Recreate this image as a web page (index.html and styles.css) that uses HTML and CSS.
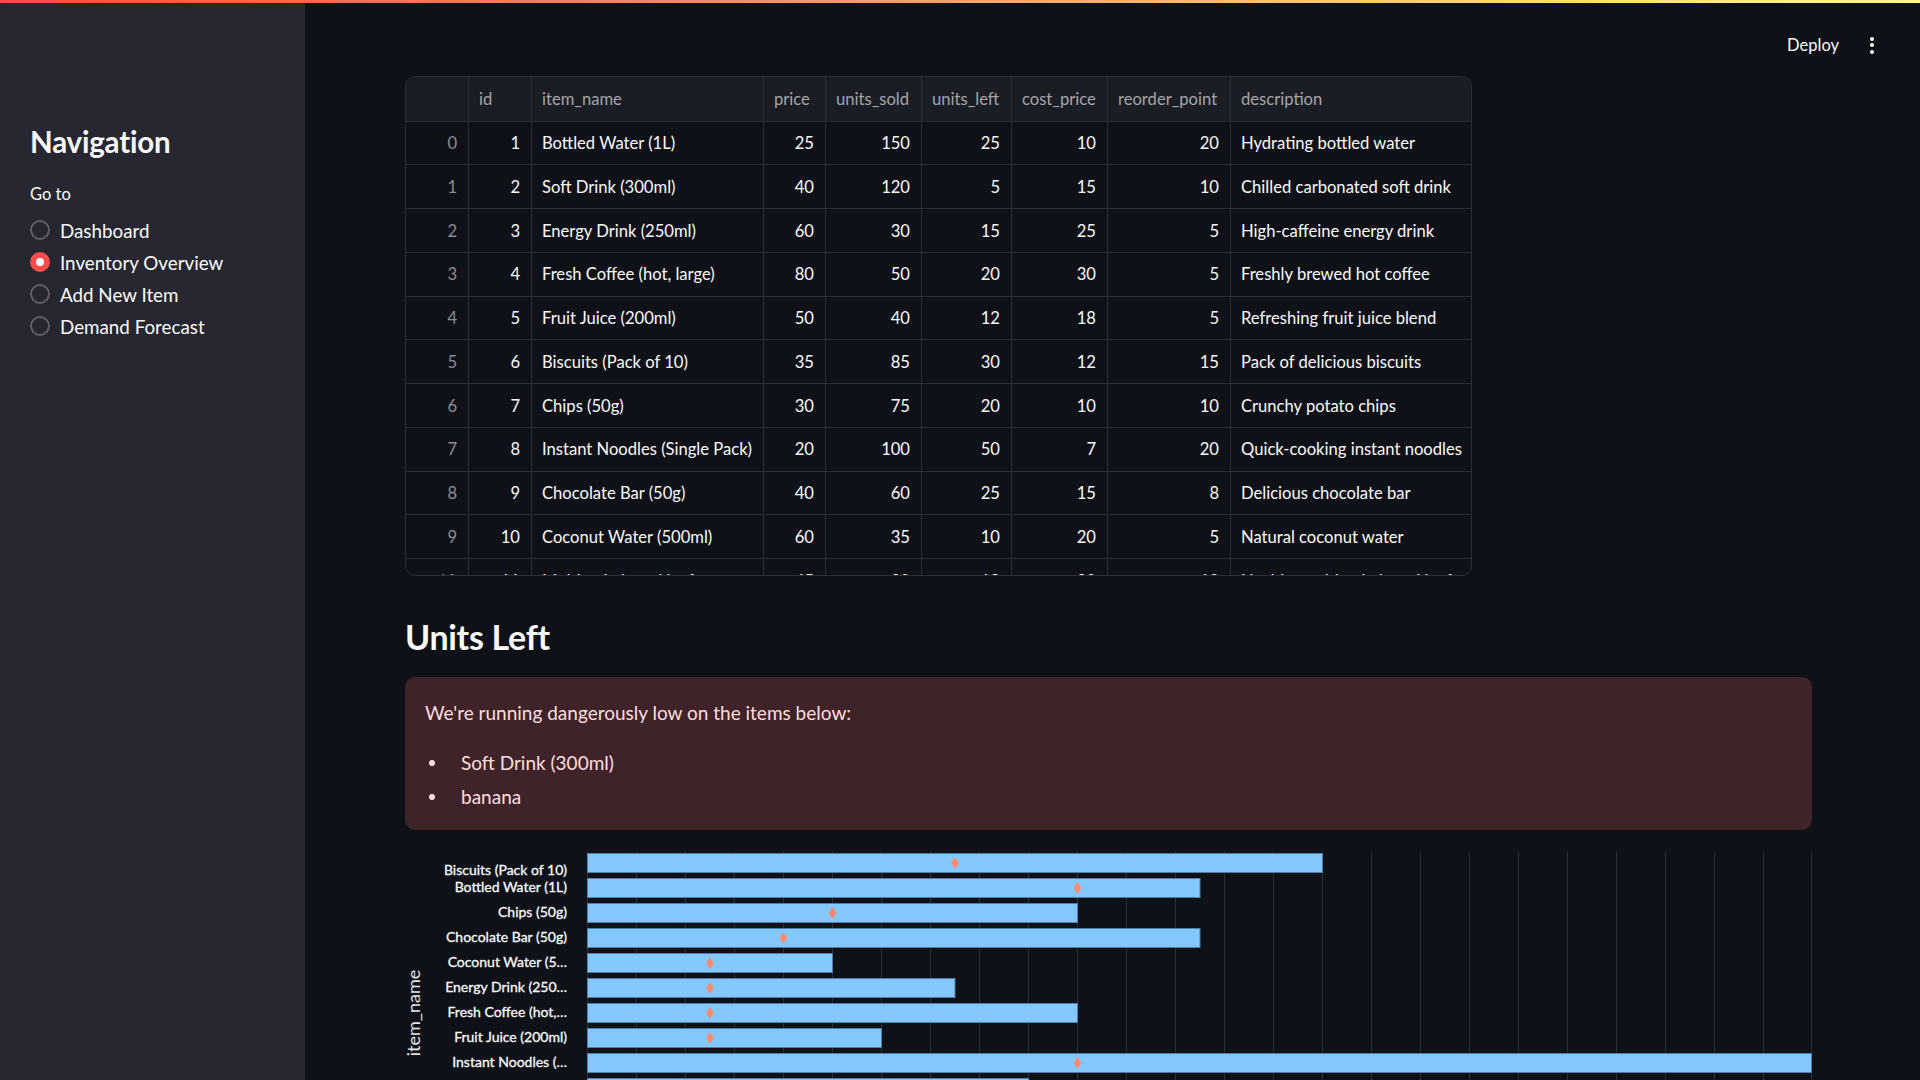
FILE: index.html
```html
<!DOCTYPE html>
<html lang="en">
<head>
<meta charset="utf-8">
<title>Inventory Overview</title>
<link rel="stylesheet" href="styles.css">
</head>
<body>
<div class="decoration"></div>
<div class="app">
  <aside class="sidebar">
    <h1 class="side-title">Navigation</h1>
    <div class="radio-label">Go to</div>
    <div class="radio-group">
      <div class="radio"><span class="dot"></span><span>Dashboard</span></div>
      <div class="radio checked"><span class="dot"></span><span>Inventory Overview</span></div>
      <div class="radio"><span class="dot"></span><span>Add New Item</span></div>
      <div class="radio"><span class="dot"></span><span>Demand Forecast</span></div>
    </div>
  </aside>
  <main class="main">
    <header class="topbar">
      <span class="deploy">Deploy</span>
      <span class="menu"><i></i><i></i><i></i></span>
    </header>

    <div class="grid">
      <div class="row head">
        <div class="c"></div><div class="c">id</div><div class="c">item_name</div><div class="c">price</div><div class="c">units_sold</div><div class="c">units_left</div><div class="c">cost_price</div><div class="c">reorder_point</div><div class="c">description</div>
      </div>
      <div class="row"><div class="c n idx">0</div><div class="c n">1</div><div class="c">Bottled Water (1L)</div><div class="c n">25</div><div class="c n">150</div><div class="c n">25</div><div class="c n">10</div><div class="c n">20</div><div class="c">Hydrating bottled water</div></div>
      <div class="row"><div class="c n idx">1</div><div class="c n">2</div><div class="c">Soft Drink (300ml)</div><div class="c n">40</div><div class="c n">120</div><div class="c n">5</div><div class="c n">15</div><div class="c n">10</div><div class="c">Chilled carbonated soft drink</div></div>
      <div class="row"><div class="c n idx">2</div><div class="c n">3</div><div class="c">Energy Drink (250ml)</div><div class="c n">60</div><div class="c n">30</div><div class="c n">15</div><div class="c n">25</div><div class="c n">5</div><div class="c">High-caffeine energy drink</div></div>
      <div class="row"><div class="c n idx">3</div><div class="c n">4</div><div class="c">Fresh Coffee (hot, large)</div><div class="c n">80</div><div class="c n">50</div><div class="c n">20</div><div class="c n">30</div><div class="c n">5</div><div class="c">Freshly brewed hot coffee</div></div>
      <div class="row"><div class="c n idx">4</div><div class="c n">5</div><div class="c">Fruit Juice (200ml)</div><div class="c n">50</div><div class="c n">40</div><div class="c n">12</div><div class="c n">18</div><div class="c n">5</div><div class="c">Refreshing fruit juice blend</div></div>
      <div class="row"><div class="c n idx">5</div><div class="c n">6</div><div class="c">Biscuits (Pack of 10)</div><div class="c n">35</div><div class="c n">85</div><div class="c n">30</div><div class="c n">12</div><div class="c n">15</div><div class="c">Pack of delicious biscuits</div></div>
      <div class="row"><div class="c n idx">6</div><div class="c n">7</div><div class="c">Chips (50g)</div><div class="c n">30</div><div class="c n">75</div><div class="c n">20</div><div class="c n">10</div><div class="c n">10</div><div class="c">Crunchy potato chips</div></div>
      <div class="row"><div class="c n idx">7</div><div class="c n">8</div><div class="c">Instant Noodles (Single Pack)</div><div class="c n">20</div><div class="c n">100</div><div class="c n">50</div><div class="c n">7</div><div class="c n">20</div><div class="c">Quick-cooking instant noodles</div></div>
      <div class="row"><div class="c n idx">8</div><div class="c n">9</div><div class="c">Chocolate Bar (50g)</div><div class="c n">40</div><div class="c n">60</div><div class="c n">25</div><div class="c n">15</div><div class="c n">8</div><div class="c">Delicious chocolate bar</div></div>
      <div class="row"><div class="c n idx">9</div><div class="c n">10</div><div class="c">Coconut Water (500ml)</div><div class="c n">60</div><div class="c n">35</div><div class="c n">10</div><div class="c n">20</div><div class="c n">5</div><div class="c">Natural coconut water</div></div>
      <div class="row"><div class="c n idx">10</div><div class="c n">11</div><div class="c">Multigrain bread loaf</div><div class="c n">45</div><div class="c n">30</div><div class="c n">18</div><div class="c n">30</div><div class="c n">10</div><div class="c">Healthy multigrain bread loaf</div></div>
    </div>

    <h3 class="section-title">Units Left</h3>

    <div class="alert">
      <p>We're running dangerously low on the items below:</p>
      <ul>
        <li>Soft Drink (300ml)</li>
        <li>banana</li>
      </ul>
    </div>

    <svg class="chart" width="1407" height="300" viewBox="0 0 1407 300" xmlns="http://www.w3.org/2000/svg">
      <g class="gridlines" stroke="#2c2f37" stroke-width="1">
        <line x1="182.5" y1="6.5" x2="182.5" y2="300"/><line x1="231.5" y1="6.5" x2="231.5" y2="300"/><line x1="280.5" y1="6.5" x2="280.5" y2="300"/><line x1="329.5" y1="6.5" x2="329.5" y2="300"/><line x1="378.5" y1="6.5" x2="378.5" y2="300"/><line x1="427.5" y1="6.5" x2="427.5" y2="300"/><line x1="476.5" y1="6.5" x2="476.5" y2="300"/><line x1="525.5" y1="6.5" x2="525.5" y2="300"/><line x1="574.5" y1="6.5" x2="574.5" y2="300"/><line x1="623.5" y1="6.5" x2="623.5" y2="300"/><line x1="672.5" y1="6.5" x2="672.5" y2="300"/><line x1="721.5" y1="6.5" x2="721.5" y2="300"/><line x1="770.5" y1="6.5" x2="770.5" y2="300"/><line x1="819.5" y1="6.5" x2="819.5" y2="300"/><line x1="868.5" y1="6.5" x2="868.5" y2="300"/><line x1="917.5" y1="6.5" x2="917.5" y2="300"/><line x1="966.5" y1="6.5" x2="966.5" y2="300"/><line x1="1015.5" y1="6.5" x2="1015.5" y2="300"/><line x1="1064.5" y1="6.5" x2="1064.5" y2="300"/><line x1="1113.5" y1="6.5" x2="1113.5" y2="300"/><line x1="1162.5" y1="6.5" x2="1162.5" y2="300"/><line x1="1211.5" y1="6.5" x2="1211.5" y2="300"/><line x1="1260.5" y1="6.5" x2="1260.5" y2="300"/><line x1="1309.5" y1="6.5" x2="1309.5" y2="300"/><line x1="1358.5" y1="6.5" x2="1358.5" y2="300"/><line x1="1406.5" y1="6.5" x2="1406.5" y2="300"/>
      </g>
      <g class="bars" fill="#83c9ff" stroke="#4d7fa6" stroke-width="1">
        <rect x="182.5" y="8.5" width="735" height="19"/>
        <rect x="182.5" y="33.5" width="612.5" height="19"/>
        <rect x="182.5" y="58.5" width="490" height="19"/>
        <rect x="182.5" y="83.5" width="612.5" height="19"/>
        <rect x="182.5" y="108.5" width="245" height="19"/>
        <rect x="182.5" y="133.5" width="367.5" height="19"/>
        <rect x="182.5" y="158.5" width="490" height="19"/>
        <rect x="182.5" y="183.5" width="294" height="19"/>
        <rect x="182.5" y="208.5" width="1224" height="19"/>
        <rect x="182.5" y="233.5" width="441" height="19"/>
      </g>
      <g class="markers" fill="#ff8a72">
        <path d="M550 12 L554 18 L550 24 L546 18 Z"/>
        <path d="M672.5 37 L676.5 43 L672.5 49 L668.5 43 Z"/>
        <path d="M427.5 62 L431.5 68 L427.5 74 L423.5 68 Z"/>
        <path d="M378.5 87 L382.5 93 L378.5 99 L374.5 93 Z"/>
        <path d="M305 112 L309 118 L305 124 L301 118 Z"/>
        <path d="M305 137 L309 143 L305 149 L301 143 Z"/>
        <path d="M305 162 L309 168 L305 174 L301 168 Z"/>
        <path d="M305 187 L309 193 L305 199 L301 193 Z"/>
        <path d="M672.5 212 L676.5 218 L672.5 224 L668.5 218 Z"/>
        <path d="M427.5 237 L431.5 243 L427.5 249 L423.5 243 Z"/>
      </g>
      <g class="labels">
        <text x="162" y="29.5">Biscuits (Pack of 10)</text>
        <text x="162" y="47">Bottled Water (1L)</text>
        <text x="162" y="72">Chips (50g)</text>
        <text x="162" y="97">Chocolate Bar (50g)</text>
        <text x="162" y="122">Coconut Water (5…</text>
        <text x="162" y="147">Energy Drink (250…</text>
        <text x="162" y="172">Fresh Coffee (hot,…</text>
        <text x="162" y="197">Fruit Juice (200ml)</text>
        <text x="162" y="222">Instant Noodles (…</text>
        <text x="162" y="247">Multigrain bread …</text>
      </g>
      <text class="axis-title" x="15" y="168" transform="rotate(-90 15 168)">item_name</text>
    </svg>
  </main>
</div>
</body>
</html>
```

FILE: styles.css
```css
* { box-sizing: border-box; }

html, body {
  margin: 0;
  padding: 0;
  height: 100%;
  overflow: hidden;
  background: #0e1117;
  color: #fafafa;
  font-family: Lato, "Liberation Sans", sans-serif;
}

.decoration {
  position: fixed;
  top: 0;
  left: 0;
  right: 0;
  height: 3px;
  background: linear-gradient(90deg, #ff4b4b, #fffd80);
  z-index: 10;
}

.app {
  display: flex;
  height: 100vh;
}

.sidebar {
  width: 305px;
  flex: 0 0 305px;
  background: #262730;
  padding: 123px 30px 0 30px;
}

.side-title {
  margin: 0;
  font-size: 29.5px;
  line-height: 38px;
  font-weight: 700;
  color: #fafafa;
  letter-spacing: -0.2px;
}

.radio-label {
  margin-top: 22px;
  font-size: 16.5px;
  line-height: 22px;
  color: #fafafa;
}

.radio-group {
  margin-top: 9px;
  display: flex;
  flex-direction: column;
}

.radio {
  display: flex;
  align-items: center;
  gap: 10px;
  height: 32px;
  font-size: 18.8px;
  color: #fafafa;
}

.radio .dot {
  width: 20px;
  height: 20px;
  border-radius: 50%;
  border: 2px solid #5f6169;
  flex: 0 0 20px;
  position: relative;
}

.radio.checked .dot {
  background: #ff4b4b;
  border-color: #ff4b4b;
}

.radio.checked .dot::after {
  content: "";
  position: absolute;
  left: 4px;
  top: 4px;
  width: 8px;
  height: 8px;
  border-radius: 50%;
  background: #ffffff;
}

.main {
  flex: 1;
  position: relative;
  padding: 76px 108px 0 100px;
  overflow: hidden;
}

.topbar {
  position: absolute;
  top: 0;
  right: 0;
  height: 90px;
  display: flex;
  align-items: center;
  padding-right: 46px;
  gap: 31px;
}

.deploy {
  font-size: 16.5px;
  color: #fafafa;
}

.menu {
  display: flex;
  flex-direction: column;
  gap: 2.5px;
  width: 4px;
}

.menu i {
  display: block;
  width: 4px;
  height: 4px;
  border-radius: 50%;
  background: #fafafa;
}

/* data grid */
.grid {
  width: 1067px;
  height: 500px;
  border: 1px solid #2b2e35;
  border-radius: 10px;
  overflow: hidden;
  font-size: 16.6px;
}

.row {
  display: grid;
  grid-template-columns: 63px 63px 232px 62px 96px 90px 96px 123px 241px;
  height: 43.75px;
  border-bottom: 1px solid #2b2e35;
}

.row.head {
  height: 44.7px;
  background: #1b1d25;
  color: #a3a5ab;
}

.c {
  display: flex;
  align-items: center;
  padding: 0 10px;
  border-right: 1px solid #2b2e35;
  white-space: nowrap;
  overflow: hidden;
}

.c:last-child { border-right: none; }

.c.n { justify-content: flex-end; padding-right: 11px; }
.c.idx { color: #8b8d93; }

.section-title {
  margin: 40px 0 0 0;
  font-size: 34px;
  line-height: 42px;
  font-weight: 700;
  color: #fafafa;
  letter-spacing: -0.3px;
}

.alert {
  margin-top: 19px;
  width: 1407px;
  background: #3e2428;
  border-radius: 10px;
  padding: 20px 20px 16.5px;
  color: #ffdede;
  font-size: 19px;
}

.alert p {
  margin: 0 0 18px 0;
  line-height: 32px;
}

.alert ul {
  margin: 0;
  padding: 0;
  list-style: none;
}

.alert li {
  display: flex;
  align-items: center;
  line-height: 32px;
  margin-top: 2px;
}

.alert li::before {
  content: "";
  width: 6px;
  height: 6px;
  border-radius: 50%;
  background: #ffdede;
  margin: 0 26px 0 4px;
  flex: 0 0 6px;
}

.alert li:first-child { margin-top: 0; }

.chart {
  display: block;
  margin-top: 15.5px;
}

.labels text {
  font-family: Lato, "Liberation Sans", sans-serif;
  font-size: 14px;
  fill: #fafafa;
  stroke: #fafafa;
  stroke-width: 0.3px;
  text-anchor: end;
}

.axis-title {
  font-family: Lato, "Liberation Sans", sans-serif;
  font-size: 18px;
  fill: #e6e6e8;
  text-anchor: middle;
}
```
